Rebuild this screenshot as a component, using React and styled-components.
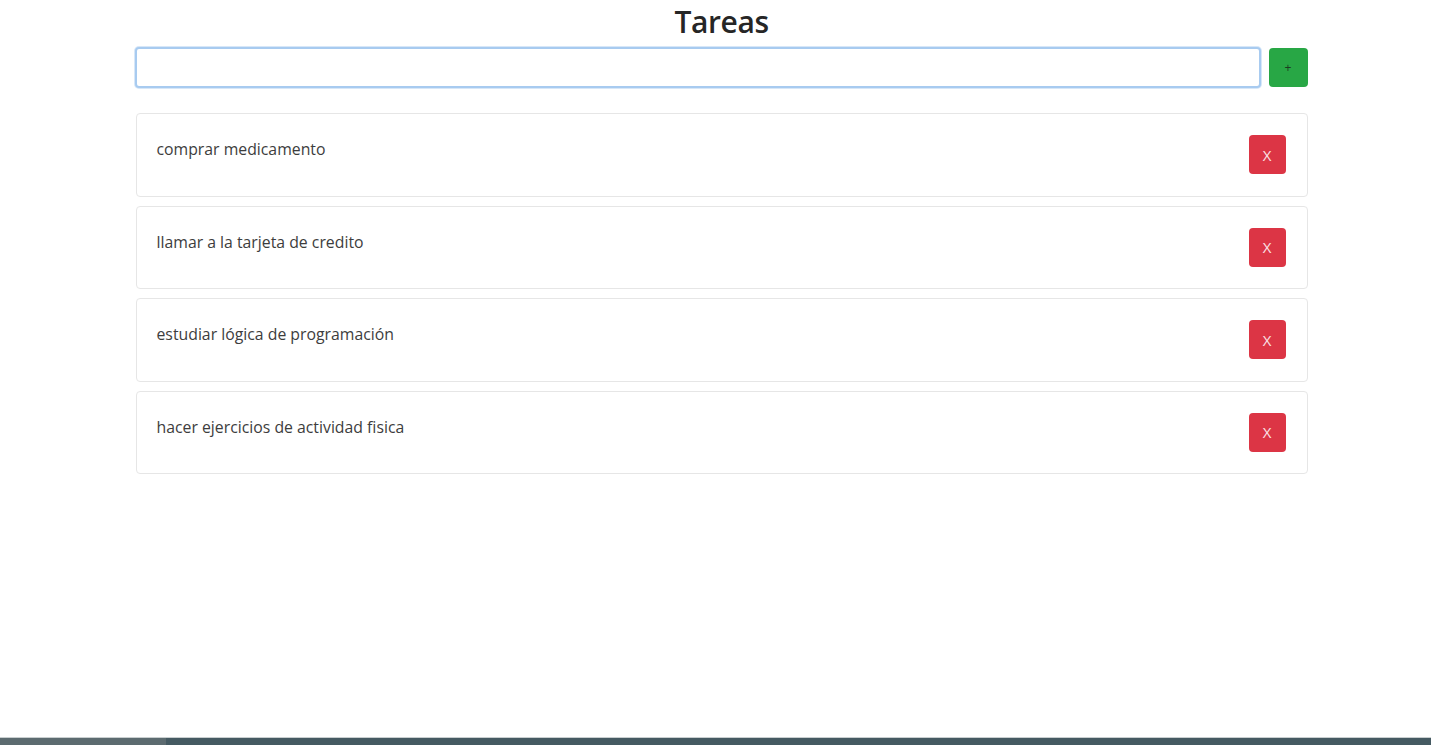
import React, { useState } from 'react'
import styled, { createGlobalStyle } from 'styled-components'

const GlobalStyle = createGlobalStyle`
    html, body {
        margin: 0;
        padding: 0;
        background: #ffffff;
    }
    body {
        font-family: "Open Sans", "Noto Sans", sans-serif;
        color: #212529;
    }
`

const Page = styled.div`
    height: 745px;
    display: flex;
    flex-direction: column;
`

const Main = styled.main`
    flex: 1;
    display: flex;
    flex-direction: column;
    align-items: center;
`

const Container = styled.div`
    width: 1172px;
    margin-left: 12px;
    display: flex;
    flex-direction: column;
`

const Title = styled.h1`
    margin: 2px 0 0 0;
    text-align: center;
    font-size: 30px;
    font-weight: 600;
    line-height: 40px;
    color: #262626;
    letter-spacing: -0.4px;
`

const Form = styled.form`
    display: flex;
    align-items: center;
    gap: 8px;
    margin-top: 5px;
    margin-left: -1px;
`

const Input = styled.input`
    flex: 1;
    height: 41px;
    box-sizing: border-box;
    border: 2px solid #a8cbf0;
    border-radius: 4px;
    box-shadow: 0 0 0 1px #d7e7f8;
    outline: none;
    padding: 0 12px;
    font-size: 16px;
    font-family: inherit;
`

const AddButton = styled.button`
    width: 39px;
    height: 39px;
    border: none;
    border-radius: 4px;
    background: #28a745;
    color: #1d3b22;
    font-size: 12px;
    font-family: inherit;
    padding: 0;
    cursor: pointer;
`

const List = styled.div`
    display: flex;
    flex-direction: column;
    gap: 9px;
    margin-top: 25px;
`

const Card = styled.div`
    height: 83.5px;
    box-sizing: border-box;
    border: 1px solid #e6e6e6;
    border-radius: 4px;
    display: flex;
    justify-content: space-between;
    padding: 0 21px 0 20px;
`

const TaskText = styled.span`
    margin-top: 24px;
    font-size: 15.8px;
    line-height: 22px;
    color: #3d3d3d;
`

const DeleteButton = styled.button`
    align-self: center;
    width: 37px;
    height: 39px;
    border: none;
    border-radius: 4px;
    background: #dc3545;
    color: #fbe3e5;
    font-size: 15px;
    font-family: inherit;
    padding: 0;
    cursor: pointer;
`

const Taskbar = styled.div`
    height: 7px;
    display: flex;
    border-top: 1px solid #c9cfd0;
    background: #455a62;

    & > .start {
        width: 166px;
        background: #5c6b70;
    }
`

const initialTasks = [
    'comprar medicamento',
    'llamar a la tarjeta de credito',
    'estudiar lógica de programación',
    'hacer ejercicios de actividad fisica',
]

function App() {
    const [tasks, setTasks] = useState(initialTasks)
    const [value, setValue] = useState('')

    const addTask = (e) => {
        e.preventDefault()
        if (!value.trim()) return
        setTasks([...tasks, value.trim()])
        setValue('')
    }

    return (
        <Page>
            <GlobalStyle />
            <Main>
                <Container>
                    <Title>Tareas</Title>
                    <Form onSubmit={addTask}>
                        <Input value={value} onChange={(e) => setValue(e.target.value)} />
                        <AddButton type="submit">+</AddButton>
                    </Form>
                    <List>
                        {tasks.map((t, i) => (
                            <Card key={i}>
                                <TaskText>{t}</TaskText>
                                <DeleteButton onClick={() => setTasks(tasks.filter((_, j) => j !== i))}>
                                    X
                                </DeleteButton>
                            </Card>
                        ))}
                    </List>
                </Container>
            </Main>
            <Taskbar>
                <div className="start" />
            </Taskbar>
        </Page>
    )
}

export default App
